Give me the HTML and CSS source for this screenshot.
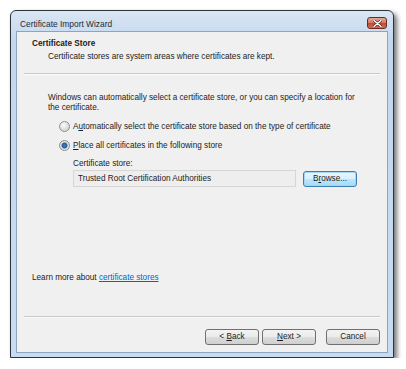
FILE: index.html
```html
<!DOCTYPE html>
<html lang="en">
<head>
	<meta charset="UTF-8">
	<title>Certificate Import Wizard</title>
	<link rel="stylesheet" href="styles.css">
</head>
<body>
	<div class="window">
		<div class="titlebar">
			<span class="title">Certificate Import Wizard</span>
			<a class="close" href="javascript:void(0);">
				<svg width="9" height="7" viewBox="0 0 9 7">
					<path d="M1 0.5 L8 6.5 M8 0.5 L1 6.5" stroke="#5a1a14" stroke-width="2.6" stroke-linecap="round"/>
					<path d="M1 0.5 L8 6.5 M8 0.5 L1 6.5" stroke="#fff" stroke-width="1.4" stroke-linecap="round"/>
				</svg>
			</a>
		</div>
		<div class="client">
			<div class="header">
				<h1 class="page-title">Certificate Store</h1>
				<p class="page-sub">Certificate stores are system areas where certificates are kept.</p>
			</div>
			<div class="rule"></div>
			<div class="body">
				<p class="intro">Windows can automatically select a certificate store, or you can specify a location for the certificate.</p>
				<label class="radio-row">
					<span class="radio"></span>
					<span>A<u>u</u>tomatically select the certificate store based on the type of certificate</span>
				</label>
				<label class="radio-row">
					<span class="radio checked"></span>
					<span><u>P</u>lace all certificates in the following store</span>
				</label>
				<div class="store">
					<div class="store-label">Certificate store:</div>
					<div class="store-row">
						<div class="textbox">Trusted Root Certification Authorities</div>
						<button class="btn default">B<u>r</u>owse...</button>
					</div>
				</div>
				<p class="learn">Learn more about <a href="javascript:void(0);">certificate stores</a></p>
			</div>
			<div class="rule"></div>
			<div class="footer">
				<button class="btn">&lt; <u>B</u>ack</button>
				<button class="btn"><u>N</u>ext &gt;</button>
				<button class="btn cancel">Cancel</button>
			</div>
		</div>
	</div>
</body>
</html>
```

FILE: styles.css
```css
body{
	margin: 0;
	background: #fff;
	font-family: "Liberation Sans", Arial, sans-serif;
	font-size: 8.2px;
	line-height: 10px;
	color: #1c1c1c;
}
.window{
	margin: 10px 0 0 10px;
	width: 382px;
	height: 346px;
	border: 1px solid #2f3338;
	border-radius: 6px 6px 0 0;
	background: linear-gradient(#d9e6f4, #c3d8ef 30px, #c6dcf3);
	box-shadow: 3px 3px 5px rgba(0,0,0,0.55);
	display: flex;
	flex-direction: column;
}
.titlebar{
	height: 20px;
	display: flex;
	align-items: flex-end;
	justify-content: space-between;
	padding: 0 6px 2px 9px;
	box-sizing: border-box;
}
.title{
	color: #1e2a36;
	font-size: 8.4px;
}
.close{
	width: 20px;
	height: 12px;
	border: 1px solid #6a2b22;
	border-radius: 3px;
	box-sizing: border-box;
	background: linear-gradient(#e3a898, #cf7863 50%, #c04a34 55%, #d06e57);
	display: flex;
	align-items: center;
	justify-content: center;
}
.client{
	flex: 1;
	margin: 0 5px 4px 5px;
	border: 1px solid #8ea4bd;
	background: #f0f0f0;
	display: flex;
	flex-direction: column;
}
.header{
	padding: 7px 0 0 15px;
}
.page-title{
	margin: 0;
	font-size: 8.2px;
	font-weight: bold;
}
.page-sub{
	margin: 3px 0 0 16px;
}
.rule{
	margin: 0 7px;
	border-top: 1px solid #c9c9c9;
	border-bottom: 1px solid #fbfbfb;
}
.header + .rule{
	margin-top: 11px;
}
.body{
	flex: 1;
	padding: 18px 0 0 31px;
	display: flex;
	flex-direction: column;
}
.intro{
	margin: 0;
	width: 320px;
}
.radio-row{
	display: flex;
	align-items: center;
	gap: 3px;
	margin: 8px 0 0 11px;
}
.radio{
	width: 9px;
	height: 9px;
	border: 1px solid #8f8f8f;
	border-radius: 50%;
	background: radial-gradient(circle at 40% 35%, #fafafa, #d8d8d8 70%, #c4c4c4);
}
.radio.checked{
	background: radial-gradient(circle, #3c7cc4 0, #2a5f9e 2.5px, #e6e6e6 3.5px, #c8c8c8);
}
.store{
	margin: 8px 0 0 25px;
}
.store-row{
	display: flex;
	align-items: center;
	gap: 7px;
	margin-top: 1px;
}
.textbox{
	width: 217px;
	height: 15px;
	padding-left: 4px;
	border: 1px solid #d6d6d6;
	background: #eeeeee;
	line-height: 15px;
}
.btn{
	font: inherit;
	color: #1c1c1c;
	height: 16px;
	padding: 0;
	border: 1px solid #707070;
	border-radius: 3px;
	background: linear-gradient(#f3f3f3, #ebebeb 50%, #dddddd 50%, #cfcfcf);
	width: 54px;
	line-height: 14px;
}
.btn.default{
	border-color: #3c7fb1;
	box-shadow: inset 0 0 0 1px #a6d6f0;
	background: linear-gradient(#eaf6fd, #d9f0fc 50%, #bee6fd 50%, #a7d9f5);
}
.learn{
	margin: auto 0 33px -16px;
}
.learn a{
	color: #0066cc;
}
.footer{
	display: flex;
	justify-content: flex-end;
	gap: 3px;
	padding: 11px 7px 7px 0;
}
.footer .cancel{
	margin-left: 7px;
}
u{
	text-decoration: underline;
}
```
